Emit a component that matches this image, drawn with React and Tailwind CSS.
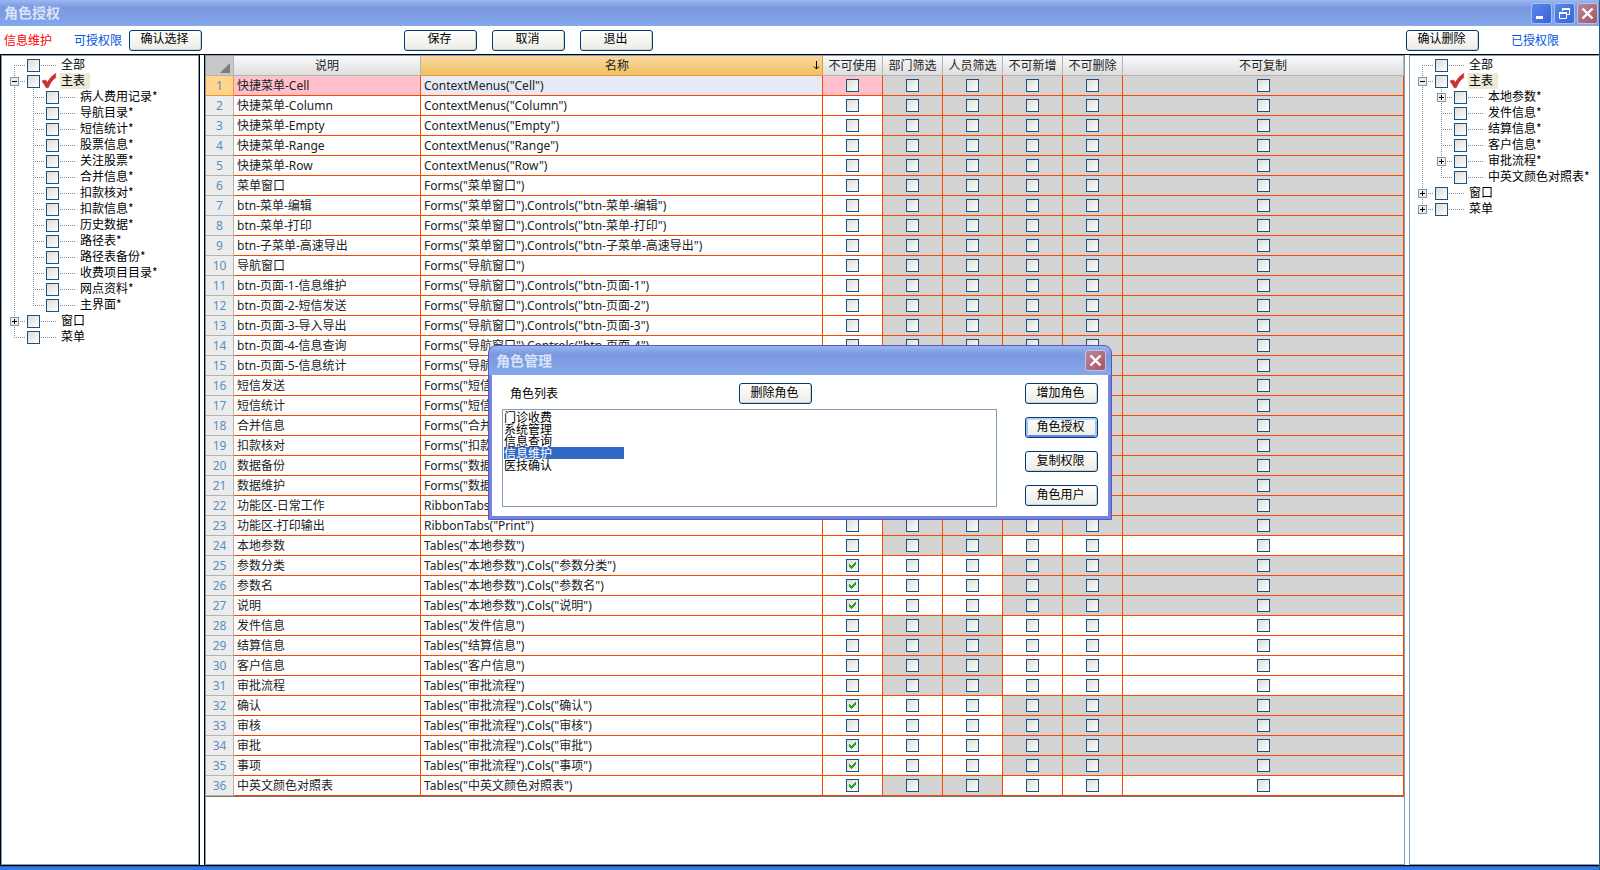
// src/App.jsx
import React, { useState } from "react";

const CHECK_COLUMNS = ["不可使用", "部门筛选", "人员筛选", "不可新增", "不可删除", "不可复制"];

// Kolom abu-abu per tipe baris
const GRAY_COLUMNS = {
  item: [1, 2, 3, 4, 5],
  table: [1, 2],
  column: [3, 4, 5],
};

const ROWS = [
  { desc: "快捷菜单-Cell", name: 'ContextMenus("Cell")', type: "item" },
  { desc: "快捷菜单-Column", name: 'ContextMenus("Column")', type: "item" },
  { desc: "快捷菜单-Empty", name: 'ContextMenus("Empty")', type: "item" },
  { desc: "快捷菜单-Range", name: 'ContextMenus("Range")', type: "item" },
  { desc: "快捷菜单-Row", name: 'ContextMenus("Row")', type: "item" },
  { desc: "菜单窗口", name: 'Forms("菜单窗口")', type: "item" },
  { desc: "btn-菜单-编辑", name: 'Forms("菜单窗口").Controls("btn-菜单-编辑")', type: "item" },
  { desc: "btn-菜单-打印", name: 'Forms("菜单窗口").Controls("btn-菜单-打印")', type: "item" },
  { desc: "btn-子菜单-高速导出", name: 'Forms("菜单窗口").Controls("btn-子菜单-高速导出")', type: "item" },
  { desc: "导航窗口", name: 'Forms("导航窗口")', type: "item" },
  { desc: "btn-页面-1-信息维护", name: 'Forms("导航窗口").Controls("btn-页面-1")', type: "item" },
  { desc: "btn-页面-2-短信发送", name: 'Forms("导航窗口").Controls("btn-页面-2")', type: "item" },
  { desc: "btn-页面-3-导入导出", name: 'Forms("导航窗口").Controls("btn-页面-3")', type: "item" },
  { desc: "btn-页面-4-信息查询", name: 'Forms("导航窗口").Controls("btn-页面-4")', type: "item" },
  { desc: "btn-页面-5-信息统计", name: 'Forms("导航窗口").Controls("btn-页面-5")', type: "item" },
  { desc: "短信发送", name: 'Forms("短信发送")', type: "item" },
  { desc: "短信统计", name: 'Forms("短信统计")', type: "item" },
  { desc: "合并信息", name: 'Forms("合并信息")', type: "item" },
  { desc: "扣款核对", name: 'Forms("扣款核对")', type: "item" },
  { desc: "数据备份", name: 'Forms("数据备份")', type: "item" },
  { desc: "数据维护", name: 'Forms("数据维护")', type: "item" },
  { desc: "功能区-日常工作", name: 'RibbonTabs("Daily")', type: "item" },
  { desc: "功能区-打印输出", name: 'RibbonTabs("Print")', type: "item" },
  { desc: "本地参数", name: 'Tables("本地参数")', type: "table" },
  { desc: "参数分类", name: 'Tables("本地参数").Cols("参数分类")', type: "column", checked: true },
  { desc: "参数名", name: 'Tables("本地参数").Cols("参数名")', type: "column", checked: true },
  { desc: "说明", name: 'Tables("本地参数").Cols("说明")', type: "column", checked: true },
  { desc: "发件信息", name: 'Tables("发件信息")', type: "table" },
  { desc: "结算信息", name: 'Tables("结算信息")', type: "table" },
  { desc: "客户信息", name: 'Tables("客户信息")', type: "table" },
  { desc: "审批流程", name: 'Tables("审批流程")', type: "table" },
  { desc: "确认", name: 'Tables("审批流程").Cols("确认")', type: "column", checked: true },
  { desc: "审核", name: 'Tables("审批流程").Cols("审核")', type: "column" },
  { desc: "审批", name: 'Tables("审批流程").Cols("审批")', type: "column", checked: true },
  { desc: "事项", name: 'Tables("审批流程").Cols("事项")', type: "column", checked: true },
  { desc: "中英文颜色对照表", name: 'Tables("中英文颜色对照表")', type: "table", checked: true },
];

const LEFT_TREE = [
  { label: "全部" },
  {
    label: "主表",
    selected: true,
    open: true,
    children: [
      "病人费用记录*",
      "导航目录*",
      "短信统计*",
      "股票信息*",
      "关注股票*",
      "合并信息*",
      "扣款核对*",
      "扣款信息*",
      "历史数据*",
      "路径表*",
      "路径表备份*",
      "收费项目目录*",
      "网点资料*",
      "主界面*",
    ].map((label) => ({ label })),
  },
  { label: "窗口", open: false },
  { label: "菜单" },
];

const RIGHT_TREE = [
  { label: "全部" },
  {
    label: "主表",
    selected: true,
    open: true,
    children: [
      { label: "本地参数*", open: false },
      { label: "发件信息*" },
      { label: "结算信息*" },
      { label: "客户信息*" },
      { label: "审批流程*", open: false },
      { label: "中英文颜色对照表*" },
    ],
  },
  { label: "窗口", open: false },
  { label: "菜单", open: false },
];

const ROLES = ["门诊收费", "系统管理", "信息查询", "信息维护", "医技确认"];

const CheckBox = ({ id, label, defaultChecked }) => (
  <span className="relative block size-[13px] shrink-0">
    <input
      type="checkbox"
      id={id}
      aria-label={label}
      defaultChecked={defaultChecked}
      className="peer block size-[13px] appearance-none border border-[#1c5180] bg-linear-to-br from-[#dcdcd7] to-white"
    />
    <svg
      viewBox="0 0 7 7"
      shapeRendering="crispEdges"
      className="pointer-events-none absolute top-[3px] left-[3px] hidden size-[7px] peer-checked:block"
    >
      <path
        fill="#21a121"
        d="M0 2h1v1h1v1h1v-1h1v-1h1v-1h1v-1h1v3h-1v1h-1v1h-1v1h-1v1h-1v-1h-1v-1h-1z"
      />
    </svg>
  </span>
);

const XpButton = ({ children, focused }) => (
  <button
    className={`flex h-[21px] w-[73px] items-center justify-center rounded-[3px] border border-[#003c74] bg-linear-to-b from-white to-[#ecebe4] pr-0.5 pb-1 text-xs ${
      focused
        ? "shadow-[inset_0_2px_0_#bcd4f6,inset_2px_0_0_#a3c1f0,inset_-2px_0_0_#a3c1f0,inset_0_-2px_0_#6982ee]"
        : "shadow-[inset_-1px_-1px_0_#d6d0c5]"
    }`}
  >
    {children}
  </button>
);

const CaptionButton = ({ label, close, children }) => (
  <button
    aria-label={label}
    className={`flex size-[21px] items-center justify-center rounded-[3px] border ${
      close
        ? "border-[#c3c0e6] bg-linear-to-br from-[#b58a9f] to-[#a8535f]"
        : "border-[#a9c0f3] bg-linear-to-br from-[#5b86e8] to-[#3a64d8]"
    }`}
  >
    <svg viewBox="0 0 19 19" className="size-[19px]" fill="none" stroke="#fff">
      {children}
    </svg>
  </button>
);

const CloseButton = () => (
  <CaptionButton label="关闭" close>
    <path d="M4.5 4.5l10 10M14.5 4.5l-10 10" strokeWidth="2.4" />
  </CaptionButton>
);

/* ---------- Tree ---------- */

const RedCheck = () => (
  <svg viewBox="0 0 16 16" className="absolute top-0 left-px size-4">
    <path
      d="M1 8L4.500 7l2 2.500C8.500 5.500 11 2.500 15 .5c-.6 1.500-.4 2.800-.2 4C11.500 6.500 9 10.500 7.200 14.800L5 14.500C4 12.500 2.500 10.200 1 8z"
      fill="#d2302f"
      stroke="#a83a3c"
      strokeWidth=".7"
    />
  </svg>
);

const Connector = ({ first, last, open }) => (
  <svg viewBox="0 0 17 16" className="h-4 w-[17px] shrink-0" shapeRendering="crispEdges">
    <path
      d={first ? "M4.5 8V16" : last ? "M4.5 0V9" : "M4.5 0V16"}
      stroke="#8c8c8c"
      strokeDasharray="1 1"
    />
    <path d="M4 8.500H16" stroke="#8c8c8c" strokeDasharray="1 1" />
    {open !== undefined && (
      <g>
        <rect x=".5" y="4.500" width="8" height="8" fill="#efede7" stroke="#7898b5" />
        <path d={open ? "M2 8.500h5" : "M2 8.500h5M4.500 6v5"} stroke="#000" />
      </g>
    )}
  </svg>
);

const TreeNode = ({ node, id, depth = 0, first, last }) => (
  <li>
    <div className="flex h-4 items-center">
      {depth > 0 && (
        <svg viewBox="0 0 19 16" className="h-4 w-[19px] shrink-0" shapeRendering="crispEdges">
          <path d="M4.500 0V16" stroke="#8c8c8c" strokeDasharray="1 1" />
        </svg>
      )}
      <Connector first={first} last={last} open={node.open} />
      <CheckBox id={id} />
      <span className="relative h-4 w-5 shrink-0">
        {node.selected ? (
          <RedCheck />
        ) : (
          <svg viewBox="0 0 20 16" className="h-4 w-5" shapeRendering="crispEdges">
            <path d="M1 8.500H17" stroke="#8c8c8c" strokeDasharray="1 1" />
          </svg>
        )}
      </span>
      <label
        htmlFor={id}
        className={`h-4 pr-[5px] pl-px text-xs leading-[14px] whitespace-nowrap ${
          node.selected ? "bg-[#ece9d8]" : ""
        }`}
      >
        {node.label}
      </label>
    </div>
    {node.children && (
      <ul>
        {node.children.map((child, i) => (
          <TreeNode
            key={child.label}
            node={child}
            id={`${id}-${i}`}
            depth={depth + 1}
            last={i === node.children.length - 1}
          />
        ))}
      </ul>
    )}
  </li>
);

const Tree = ({ nodes, name }) => (
  <ul className="pt-px pl-2">
    {nodes.map((node, i) => (
      <TreeNode
        key={node.label}
        node={node}
        id={`${name}-${i}`}
        first={i === 0}
        last={i === nodes.length - 1}
      />
    ))}
  </ul>
);

/* ---------- Grid ---------- */

const headCell =
  "h-5 border-r border-b border-[#b4b4b4] bg-linear-to-b from-[#fafafa] to-[#dedede] p-0 font-normal";

const PermissionGrid = () => (
  <table className="w-full table-fixed border-separate border-spacing-0 border-b border-[#75756b] font-['Noto_Sans','Noto_Sans_CJK_SC',sans-serif] text-xs leading-[19px] text-[#222]">
    <colgroup>
      <col className="w-7" />
      <col className="w-[187px]" />
      <col className="w-[402px]" />
      <col className="w-15" />
      <col className="w-15" />
      <col className="w-15" />
      <col className="w-15" />
      <col className="w-15" />
      <col />
    </colgroup>
    <thead>
      <tr>
        <td className="h-5 border-r border-b border-[#b4b4b4] bg-[#c8c8c8] p-0">
          <svg viewBox="0 0 10 10" className="mt-1 mr-[3px] ml-auto size-2.5">
            <path d="M10 0v10H0z" fill="#7b7b7b" />
          </svg>
        </td>
        <th className={headCell}>说明</th>
        <th className="h-5 border-r border-b border-[#f29536] bg-linear-to-b from-[#f9d9a1] to-[#f1c060] p-0 font-normal">
          <div className="flex items-center">
            <span className="flex-1">名称</span>
            <svg viewBox="0 0 7 9" className="mr-0.5 h-[9px] w-[7px]" fill="none" stroke="#000">
              <path d="M3.500 0v8M1 5.500l2.500 2.500L6 5.500" />
            </svg>
          </div>
        </th>
        {CHECK_COLUMNS.map((col) => (
          <th key={col} className={headCell}>
            {col}
          </th>
        ))}
      </tr>
    </thead>
    <tbody>
      {ROWS.map((row, i) => (
        <tr key={row.name}>
          <th
            className={`h-5 border-r border-b p-0 font-normal text-[#5a8fbf] ${
              i === 0 ? "border-[#f29536] bg-[#ffd58d]" : "border-[#b4b4b4] bg-[#ececec]"
            }`}
          >
            {i + 1}
          </th>
          <td
            className={`border-r border-b border-[#ff4500] p-0 pl-[3px] whitespace-nowrap ${
              i === 0 ? "bg-[#ffc0cb]" : ""
            }`}
          >
            {row.desc}
          </td>
          <td
            className={`border-r border-b border-[#ff4500] p-0 pl-[3px] whitespace-nowrap ${
              i === 0 ? "bg-[#e7eaf5]" : ""
            }`}
          >
            {row.name}
          </td>
          {CHECK_COLUMNS.map((col, c) => (
            <td
              key={col}
              className={`border-r border-b border-[#ff4500] p-0 ${
                GRAY_COLUMNS[row.type].includes(c) ? "bg-[#d3d3d3]" : ""
              } ${i === 0 && c === 0 ? "bg-[#ffc0cb]" : ""}`}
            >
              <div className="flex justify-center">
                <CheckBox label={`${row.desc} ${col}`} defaultChecked={c === 0 && row.checked} />
              </div>
            </td>
          ))}
        </tr>
      ))}
    </tbody>
  </table>
);

/* ---------- Dialog ---------- */

const RoleDialog = () => {
  const [role, setRole] = useState("信息维护");

  return (
    <section className="absolute top-[345px] left-[488px] w-[624px] rounded-t-lg border border-[#5659bb] bg-[#7383dc]">
      <header className="flex h-[29px] items-center justify-between rounded-t-[7px] bg-linear-to-b from-[#98b5ee] via-[#7b97e0] via-30% to-[#83a8ea] pr-[5px] pl-[7px]">
        <h2 className="pb-0.5 text-sm font-bold text-[#d8e4f8]">角色管理</h2>
        <CloseButton />
      </header>
      <div className="mx-[3px] mb-[3px] flex items-start bg-white pt-2 pr-2.5 pb-[9px] pl-2.5">
        <div className="w-[495px]">
          <div className="flex h-[26px] items-start">
            <span id="roles-label" className="w-[237px] pt-0.5 pl-2 text-xs">
              角色列表
            </span>
            <XpButton>删除角色</XpButton>
          </div>
          <div
            role="radiogroup"
            aria-labelledby="roles-label"
            className="h-[98px] border border-[#7f9db9] bg-white p-px"
          >
            {ROLES.map((item) => (
              <label
                key={item}
                className="relative block h-3 w-[120px] text-xs leading-3 has-checked:bg-[#316ac5] has-checked:text-white"
              >
                <input
                  type="radio"
                  name="role"
                  value={item}
                  checked={role === item}
                  onChange={() => setRole(item)}
                  className="sr-only"
                />
                {item}
              </label>
            ))}
          </div>
        </div>
        <div className="ml-auto flex flex-col gap-[13px]">
          <XpButton>增加角色</XpButton>
          <XpButton focused>角色授权</XpButton>
          <XpButton>复制权限</XpButton>
          <XpButton>角色用户</XpButton>
        </div>
      </div>
    </section>
  );
};

const App = () => {
  return (
    <div className="relative flex h-screen flex-col overflow-hidden border-r border-[#1d5f8a] bg-white font-['Noto_Sans_CJK_SC',sans-serif] text-black">
      <header className="flex h-[26px] shrink-0 items-center justify-between bg-linear-to-b from-[#9bb8f0] via-[#7b97e0] via-30% to-[#83a8ea] pr-px pl-1">
        <h1 className="pb-0.5 text-sm font-bold text-[#d8e4f8]">角色授权</h1>
        <div className="flex gap-0.5">
          <CaptionButton label="最小化">
            <path d="M4 13.500h7" strokeWidth="3" />
          </CaptionButton>
          <CaptionButton label="还原">
            <path d="M7.500 7V4.500h7v6H12M4.500 8.500h7v6h-7z" />
            <path d="M7 5h8M4 9h8" strokeWidth="2" />
          </CaptionButton>
          <CloseButton />
        </div>
      </header>

      {/* Toolbar */}
      <div className="flex h-7 shrink-0 items-center pl-1 text-xs">
        <span className="w-[70px] text-[#f00]">信息维护</span>
        <span className="w-[55px] text-[#0054e3]">可授权限</span>
        <XpButton>确认选择</XpButton>
        <div className="ml-[202px] flex gap-[15px]">
          <XpButton>保存</XpButton>
          <XpButton>取消</XpButton>
          <XpButton>退出</XpButton>
        </div>
        <div className="ml-auto flex items-center">
          <XpButton>确认删除</XpButton>
          <span className="pr-[40px] pl-8 text-[#0054e3]">已授权限</span>
        </div>
      </div>

      <main className="flex min-h-0 flex-1 gap-1 border-y border-black">
        <aside className="w-[200px] shrink-0 border-x border-black">
          <div className="h-full border border-[#7f9db9]">
            <Tree nodes={LEFT_TREE} name="available" />
          </div>
        </aside>
        <div className="min-w-0 flex-1 border-l border-black">
          <div className="h-full overflow-hidden border border-[#7f9db9]">
            <PermissionGrid />
          </div>
        </div>
        <aside className="w-[190px] shrink-0 border border-[#7f9db9] border-r-white">
          <Tree nodes={RIGHT_TREE} name="granted" />
        </aside>
      </main>
      <footer className="h-1 shrink-0 border-t border-[#1f5fb5] bg-[#2f7ae5]" />

      <RoleDialog />
    </div>
  );
};

export default App;
